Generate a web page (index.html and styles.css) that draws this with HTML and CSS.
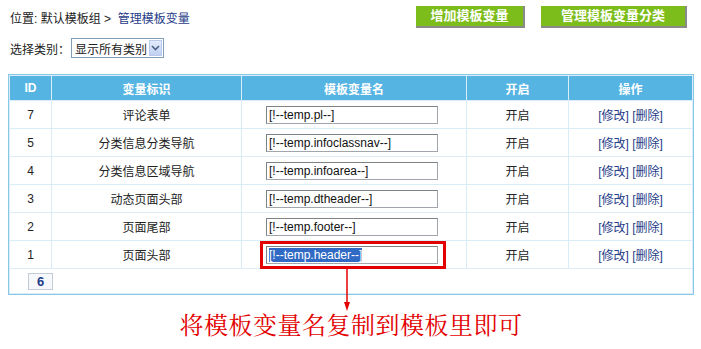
FILE: index.html
```html
<!DOCTYPE html>
<html lang="zh-CN">
<head>
<meta charset="UTF-8">
<title>管理模板变量</title>
<link rel="stylesheet" href="styles.css">
</head>
<body>

<div class="topbar">
    <div class="crumb">位置: 默认模板组 &gt;&nbsp; <a href="#">管理模板变量</a></div>
    <div class="actions">
        <a class="gbtn" href="#">增加模板变量</a>
        <a class="gbtn" href="#">管理模板变量分类</a>
    </div>
</div>

<div class="filter">
    <span>选择类别：</span>
    <span class="fakeselect">
        <span class="fs-text">显示所有类别</span>
        <span class="fs-arrow"><svg width="9" height="6" viewBox="0 0 9 6"><path d="M1 1 L4.5 4.5 L8 1" fill="none" stroke="#4d6185" stroke-width="1.6"/></svg></span>
    </span>
</div>

<table class="list">
    <thead>
        <tr>
            <th class="c-id">ID</th>
            <th class="c-mark">变量标识</th>
            <th class="c-name">模板变量名</th>
            <th class="c-on">开启</th>
            <th class="c-op">操作</th>
        </tr>
    </thead>
    <tbody>
        <tr>
            <td>7</td><td>评论表单</td>
            <td class="left"><input class="var" type="text" value="[!--temp.pl--]"></td>
            <td>开启</td><td><a href="#">[修改]</a> <a href="#">[删除]</a></td>
        </tr>
        <tr>
            <td>5</td><td>分类信息分类导航</td>
            <td class="left"><input class="var" type="text" value="[!--temp.infoclassnav--]"></td>
            <td>开启</td><td><a href="#">[修改]</a> <a href="#">[删除]</a></td>
        </tr>
        <tr>
            <td>4</td><td>分类信息区域导航</td>
            <td class="left"><input class="var" type="text" value="[!--temp.infoarea--]"></td>
            <td>开启</td><td><a href="#">[修改]</a> <a href="#">[删除]</a></td>
        </tr>
        <tr>
            <td>3</td><td>动态页面头部</td>
            <td class="left"><input class="var" type="text" value="[!--temp.dtheader--]"></td>
            <td>开启</td><td><a href="#">[修改]</a> <a href="#">[删除]</a></td>
        </tr>
        <tr>
            <td>2</td><td>页面尾部</td>
            <td class="left"><input class="var" type="text" value="[!--temp.footer--]"></td>
            <td>开启</td><td><a href="#">[修改]</a> <a href="#">[删除]</a></td>
        </tr>
        <tr>
            <td>1</td><td>页面头部</td>
            <td class="left">
                <span class="hl">
                    <span class="var sel-input"><span class="selected">[!--temp.header--]</span></span>
                    <svg class="arrow" width="10" height="44" viewBox="0 0 10 44"><path d="M5 0 V36" stroke="#e30000" stroke-width="1.5"/><path d="M2 34 L5 43 L8 34 Z" fill="#e30000"/></svg>
                </span>
            </td>
            <td>开启</td><td><a href="#">[修改]</a> <a href="#">[删除]</a></td>
        </tr>
        <tr class="pager">
            <td colspan="5"><span class="page">6</span></td>
        </tr>
    </tbody>
</table>

<p class="note">将模板变量名复制到模板里即可</p>

</body>
</html>
```

FILE: styles.css
```css
body {
    margin: 0;
    font-family: "Liberation Sans", "Noto Sans CJK SC", sans-serif;
    font-size: 12px;
    color: #222;
    background: #fff;
}
a {
    color: #1f3c88;
    text-decoration: none;
}
.topbar {
    display: flex;
    justify-content: space-between;
    align-items: center;
    padding: 6px 14px 0 10px;
    height: 22px;
}
.actions {
    display: flex;
    gap: 16px;
}
.gbtn {
    display: block;
    height: 20px;
    line-height: 20px;
    background-color: #7cbd1c;
    color: #fff;
    font-weight: bold;
    font-size: 13px;
    text-align: center;
    border-right: 2px solid #8a8a8a;
    border-bottom: 2px solid #8a8a8a;
}
.gbtn:first-child {
    width: 107px;
}
.gbtn:last-child {
    width: 144px;
}
.filter {
    display: flex;
    align-items: center;
    margin-top: 10px;
    padding-left: 10px;
    height: 20px;
}
.fakeselect {
    display: flex;
    align-items: center;
    margin-left: 1px;
    height: 18px;
    border: 1px solid #7f9db9;
    background: #fff;
}
.fs-text {
    padding: 0 2px 0 3px;
}
.fs-arrow {
    display: flex;
    align-items: center;
    justify-content: center;
    width: 13px;
    height: 16px;
    margin-right: 1px;
    background: linear-gradient(#e4ecfb, #bfd0f2);
    border: 1px solid #b9c9ec;
    box-sizing: border-box;
}
.list {
    margin: 16px 0 0 8px;
    width: 686px;
    table-layout: fixed;
    border: 1px solid #86c8e6;
    border-collapse: separate;
    border-spacing: 1px;
    background-color: #d9edf8;
}
.list th {
    background-color: #56b4e3;
    color: #fff;
    font-weight: bold;
    height: 24px;
    padding: 0;
    font-size: 12px;
}
.list td {
    background-color: #fff;
    height: 27px;
    padding: 0;
    text-align: center;
}
.list td.left {
    text-align: left;
    padding-left: 24px;
}
.c-id { width: 41px; }
.c-mark { width: 189px; }
.c-name { width: 224px; }
.c-on { width: 101px; }
.var {
    display: inline-block;
    width: 172px;
    height: 18px;
    box-sizing: border-box;
    border: 1px solid #a0a6ab;
    border-top-color: #7d8287;
    border-left-color: #7d8287;
    padding: 0 2px;
    font-family: "Liberation Sans", sans-serif;
    font-size: 12px;
    line-height: 16px;
    color: #111;
    vertical-align: middle;
}
.hl {
    position: relative;
    display: inline-block;
    vertical-align: middle;
}
.hl::after {
    content: '';
    position: absolute;
    left: -6px;
    top: -5px;
    right: -8px;
    bottom: -5px;
    border: 3px solid #e30000;
}
.sel-input {
    display: block;
}
.selected {
    background-color: #316ac5;
    color: #fff;
}
.arrow {
    position: absolute;
    left: 76px;
    top: 22px;
}
.pager td {
    text-align: left;
    height: 24px;
    padding-left: 18px;
}
.page {
    display: inline-block;
    width: 23px;
    height: 15px;
    line-height: 15px;
    text-align: center;
    border: 1px solid #c3ccd6;
    background: #f6f8fb;
    color: #1f3c88;
    font-weight: bold;
    font-size: 13px;
}
.note {
    margin: 14px 0 0 8px;
    width: 686px;
    text-align: center;
    font-family: "Noto Serif CJK SC", "Noto Sans CJK SC", serif;
    font-size: 24px;
    letter-spacing: 0.5px;
    line-height: 30px;
    color: #e30000;
}
```
